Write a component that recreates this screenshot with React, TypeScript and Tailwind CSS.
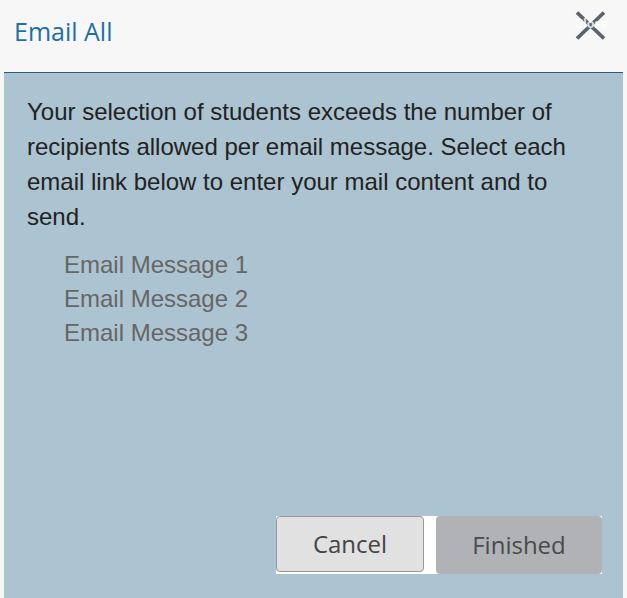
import React from "react";

export default function App() {
  return (
    <div className="w-[627px] h-[598px] bg-[#f7f7f7] flex flex-col overflow-hidden">
      <div className="h-[72px] relative flex items-start px-[14px] pt-[14px]">
        <h1
          className="text-[25px] leading-[34px] text-[#1f6ea6]"
          style={{ fontFamily: '"Open Sans", sans-serif' }}
        >
          Email All
        </h1>
        <div className="absolute left-[575px] top-[11px] w-[31px] h-[29px]">
          <svg width="31" height="29" viewBox="0 0 31 29" className="absolute left-0 top-0">
            <path d="M2 1.5 L29 27.5 M29 1.5 L2 27.5" stroke="#5b646d" strokeWidth="3.8" strokeLinecap="butt" />
          </svg>
          <span
            className="absolute left-0 top-[5px] text-[12.5px] leading-[16px] font-bold text-white/80"
            style={{ fontFamily: '"Open Sans", sans-serif' }}
          >
            Close
          </span>
        </div>
      </div>
      <div
        className="mx-[4px] flex-1 bg-[#acc3d1] border-t border-[#2d5a74] flex flex-col px-[23px] pt-[21px] pb-[24px]"
        style={{ fontFamily: '"Liberation Sans", Arial, sans-serif' }}
      >
        <p className="text-[24px] leading-[35px] text-[#222]">
          Your selection of students exceeds the number of recipients allowed per email message. Select each email link below to enter your mail content and to send.
        </p>
        <ul className="mt-[14px] pl-[37px] text-[24px] leading-[34px] text-[#666]">
          <li>Email Message 1</li>
          <li>Email Message 2</li>
          <li>Email Message 3</li>
        </ul>
        <div className="mt-auto flex justify-end">
          <div className="bg-white flex gap-[12px] mr-[-2px]" style={{ fontFamily: '"Open Sans", sans-serif' }}>
            <button className="w-[148px] h-[56px] rounded-[4px] border border-[#999] bg-[#e1e1e1] text-[24px] text-[#444]">
              Cancel
            </button>
            <button className="w-[166px] h-[58px] rounded-[4px] bg-[#b1b2b6] text-[24px] text-[#4a4a4a]">
              Finished
            </button>
          </div>
        </div>
      </div>
    </div>
  );
}
